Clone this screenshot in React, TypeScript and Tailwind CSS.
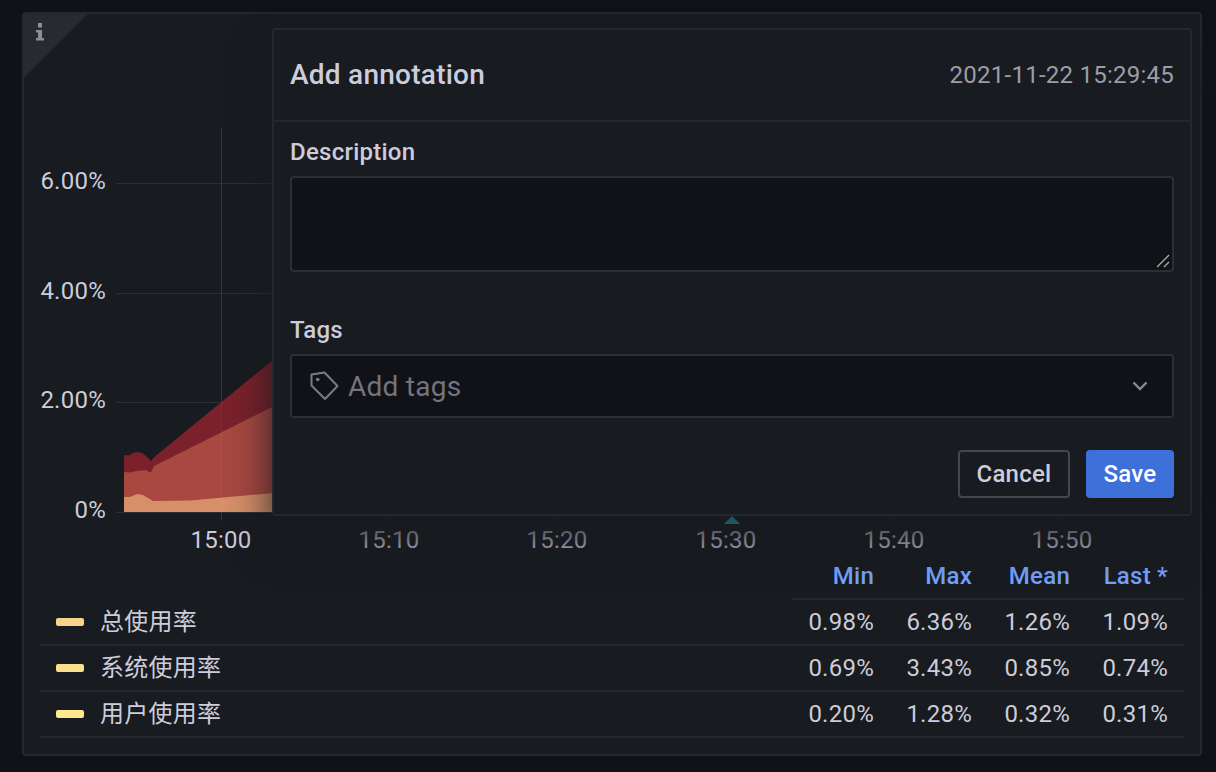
const font = "font-['Roboto','Noto_Sans_CJK_SC',sans-serif]";

const rows = [
  { name: '总使用率', color: 'bg-[#f7d38d]', values: ['0.98%', '6.36%', '1.26%', '1.09%'] },
  { name: '系统使用率', color: 'bg-[#fadf8e]', values: ['0.69%', '3.43%', '0.85%', '0.74%'] },
  { name: '用户使用率', color: 'bg-[#ffe88e]', values: ['0.20%', '1.28%', '0.32%', '0.31%'] },
];

const yLabels = [
  { label: '6.00%', y: 169 },
  { label: '4.00%', y: 279 },
  { label: '2.00%', y: 388 },
  { label: '0%', y: 498 },
];

const xLabels = [
  { label: '15:00', x: 197 },
  { label: '15:10', x: 365 },
  { label: '15:20', x: 533 },
  { label: '15:30', x: 702 },
  { label: '15:40', x: 870 },
  { label: '15:50', x: 1038 },
];

// chart is drawn in panel coordinates: svg origin sits at x=24, y=14 of the page
function Chart() {
  return (
    <svg width="1176" height="548" className="block">
      <g stroke="#2c2f34" strokeWidth="1">
        {yLabels.map((t) => (
          <line key={t.label} x1="92" x2="1100" y1={t.y + 0.5} y2={t.y + 0.5} />
        ))}
        {xLabels.map((t) => (
          <line key={t.label} x1={t.x + 0.5} x2={t.x + 0.5} y1="114" y2="506" />
        ))}
      </g>
      <polygon
        points="100,441 105,441.5 109,439 113,438 118,439 122,442 125,445 127,447.5 129,444 260,337 260,498 100,498"
        fill="#7a212b"
      />
      <polygon
        points="100,458 105,458.5 113,457 122,456 125,458 127,458.5 130,452 260,387 260,498 100,498"
        fill="#a84841"
      />
      <polygon
        points="100,483 106,483 113,480 119,481 129,487 166,486.5 260,478 260,498 100,498"
        fill="#d68f68"
      />
      <line x1="197.5" x2="197.5" y1="114" y2="506" stroke="#ffffff" strokeOpacity="0.04" />
      <g fontFamily="Roboto, sans-serif" fontSize="24" fill="#ccccdc">
        {yLabels.map((t) => (
          <text key={t.label} x="82" y={t.y + 6} textAnchor="end">
            {t.label}
          </text>
        ))}
        {xLabels.map((t) => (
          <text key={t.label} x={t.x} y="534" textAnchor="middle">
            {t.label}
          </text>
        ))}
      </g>
    </svg>
  );
}

function Legend() {
  return (
    <div className="px-4 text-[24px] text-[#ccccdc]">
      <div className="flex justify-end h-[38px]">
        <div className="flex border-b-2 border-[#24272c] font-medium text-[#74a3ff]">
          {['Min', 'Max', 'Mean', 'Last *'].map((h) => (
            <div key={h} className="w-[98px] pr-4 text-right leading-[28px]">
              {h}
            </div>
          ))}
        </div>
      </div>
      {rows.map((r) => (
        <div key={r.name} className="flex items-center h-[46px] border-b-2 border-[#24272c]">
          <span className={`mx-4 h-2 w-7 rounded-[2px] ${r.color}`} />
          <span className="flex-1">{r.name}</span>
          {r.values.map((v) => (
            <div key={v} className="w-[98px] pr-4 text-right">
              {v}
            </div>
          ))}
        </div>
      ))}
    </div>
  );
}

function AnnotationPopover() {
  return (
    <div className="absolute left-[248px] top-[14px] w-[920px] h-[488px] flex flex-col rounded-[4px] border-2 border-[#24272c] bg-[#181b1f] shadow-[0_26px_40px_rgba(24,27,31,0.9)]">
      <div className="flex items-center justify-between h-[92px] px-4 border-b-2 border-[#24272c]">
        <div className="text-[28px] font-medium text-[#ccccdc]">Add annotation</div>
        <div className="text-[24px] text-[#9d9da8]">2021-11-22 15:29:45</div>
      </div>
      <div className="flex flex-col px-4 pt-[14px]">
        <label className="text-[24px] font-medium leading-[32px] text-[#ccccdc] mb-2">Description</label>
        <div className="relative h-[96px] rounded-[4px] border-2 border-[#2c2f34] bg-[#111217]">
          <svg width="14" height="14" className="absolute right-0.5 bottom-0.5" strokeWidth="1.5">
            <line x1="0" y1="13" x2="12" y2="1" stroke="#000000" />
            <line x1="1" y1="13" x2="13" y2="1" stroke="#a8a8a8" />
            <line x1="8" y1="13" x2="13" y2="8" stroke="#a8a8a8" />
          </svg>
        </div>
        <label className="mt-[42px] text-[24px] font-medium leading-[32px] text-[#ccccdc] mb-2">Tags</label>
        <div className="flex items-center h-[64px] px-[18px] rounded-[4px] border-2 border-[#2c2f34] bg-[#111217]">
          <svg width="30" height="30" viewBox="0 0 30 30" fill="none" stroke="#7b7b85" strokeWidth="2" strokeLinejoin="round">
            <path d="M1.5 3.5 L14.5 1.5 L27 14.5 Q27.5 15 27 15.5 L15.5 27.5 Q15 28 14.5 27.5 L1.5 14.5 Z" />
            <circle cx="7.7" cy="8.5" r="1.8" fill="#7b7b85" stroke="none" />
          </svg>
          <span className="ml-2 flex-1 text-[28px] leading-[36px] pt-0.5 text-[#74747e]">Add tags</span>
          <svg width="18" height="12" viewBox="0 0 18 12" fill="none" stroke="#8a8a94" strokeWidth="2.4" className="mr-[5px]">
            <path d="M2.5 2.5 L9 9 L15.5 2.5" />
          </svg>
        </div>
        <div className="flex justify-end gap-4 mt-8">
          <button className="h-[48px] w-[112px] rounded-[4px] border-2 border-[#44474d] text-[24px] font-medium text-[#ccccdc]">
            Cancel
          </button>
          <button className="h-[48px] w-[88px] rounded-[4px] bg-[#3d71d9] text-[24px] font-medium text-white">
            Save
          </button>
        </div>
      </div>
    </div>
  );
}

export default function App() {
  return (
    <div className={`h-[772px] w-[1216px] overflow-hidden bg-[#111217] pl-[22px] pt-3 tracking-[0.25px] ${font}`}>
      <div className="relative h-[744px] w-[1180px] rounded-[4px] border-2 border-[#24272c] bg-[#181b1f]">
        {/* corner info badge */}
        <svg width="66" height="66" className="absolute left-0 top-0">
          <polygon points="0,0 64,0 0,64" fill="#272a30" />
          <path d="M14 9h4v4.5h-4z M12 16h6v8h2v2.5h-8V24h2v-5.5h-2z" fill="#8e8e98" />
        </svg>
        <Chart />
        <Legend />
        <AnnotationPopover />
        {/* annotation marker on the time axis */}
        <svg width="16" height="8" className="absolute left-[700px] top-[502px]">
          <polygon points="8,0 0,8 16,8" fill="#1d5560" />
        </svg>
      </div>
    </div>
  );
}
